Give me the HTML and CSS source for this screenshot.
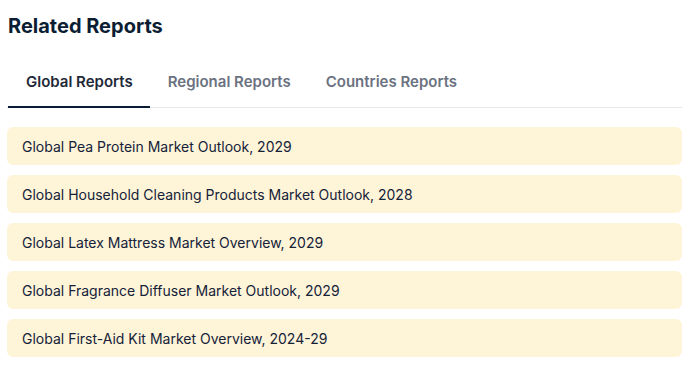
FILE: index.html
```html
<!DOCTYPE html>
<html>
<head>
<meta charset="utf-8">
<link rel="stylesheet" href="styles.css">
</head>
<body>
<section class="related">
  <h2 class="title">Related Reports</h2>
  <nav class="tabs">
    <div class="tab active">Global Reports</div>
    <div class="tab">Regional Reports</div>
    <div class="tab">Countries Reports</div>
  </nav>
  <ul class="list">
    <li class="item">Global Pea Protein Market Outlook, 2029</li>
    <li class="item">Global Household Cleaning Products Market Outlook, 2028</li>
    <li class="item">Global Latex Mattress Market Overview, 2029</li>
    <li class="item">Global Fragrance Diffuser Market Outlook, 2029</li>
    <li class="item">Global First-Aid Kit Market Overview, 2024-29</li>
  </ul>
</section>
</body>
</html>
```
FILE: styles.css
```css
html, body { margin: 0; padding: 0; background: #fff; }
body { font-family: Inter, "Noto Sans", sans-serif; }
.related { width: 675px; margin-left: 7px; padding-top: 13px; }
.title { margin: 0 0 0 1px; font-size: 20px; font-weight: 700; color: #0b1d33; line-height: 26px; }
.tabs { display: flex; margin-top: 25px; border-bottom: 1px solid #e5e7eb; }
.tab { padding: 8px 17px 14px 18px; font-size: 15px; font-weight: 600; color: #6b7280; line-height: 20px; border-bottom: 2px solid transparent; margin-bottom: -1px; }
.tab:first-child { margin-left: 1px; }
.tab.active { color: #1f2937; border-bottom-color: #0b1d33; }
.list { list-style: none; margin: 19px 0 0 0; padding: 0; display: flex; flex-direction: column; gap: 10px; }
.item { background: #fef4d8; border-radius: 6px; height: 38px; display: flex; align-items: center; padding-left: 15px; font-size: 14px; color: #152238; }
```
